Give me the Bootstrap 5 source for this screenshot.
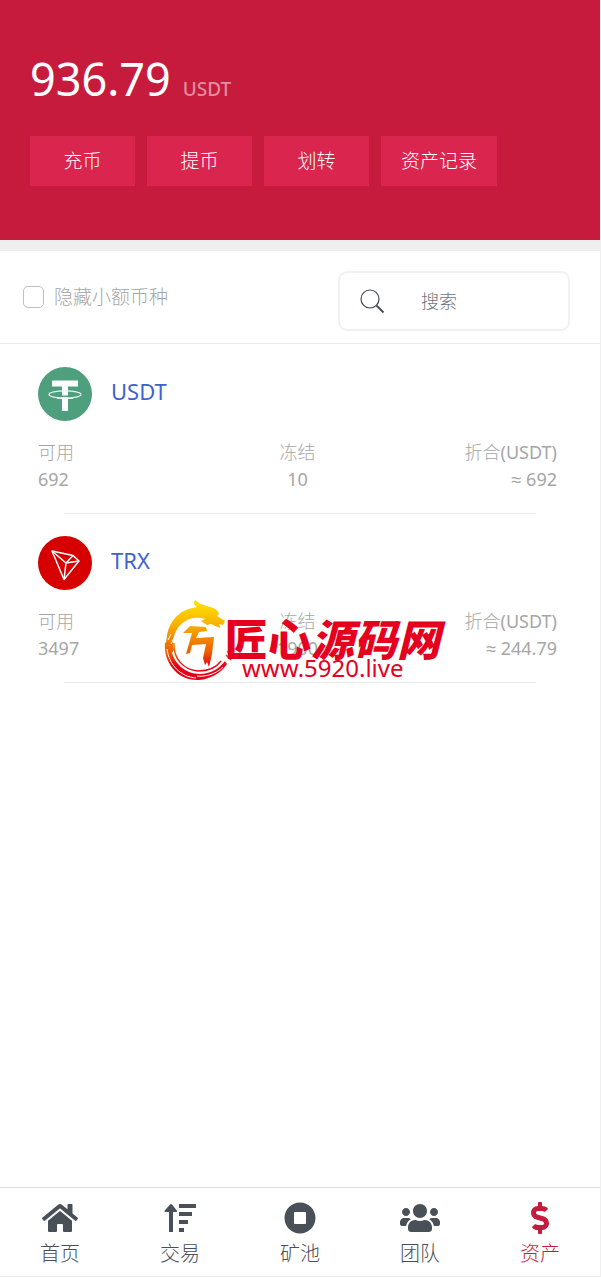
<!DOCTYPE html>
<html lang="zh-CN">
<head>
<meta charset="utf-8">
<meta name="viewport" content="width=device-width, initial-scale=1">
<title>资产</title>
<link href="https://cdn.jsdelivr.net/npm/bootstrap@5.3.0/dist/css/bootstrap.min.css" rel="stylesheet">
<style>
body { font-family: "Noto Sans", "Liberation Sans", "Noto Sans CJK SC Light", "Noto Sans CJK SC", sans-serif; font-size: 18px; line-height: 27px; color: #a6a6a6; background: #fff; }
.screen { min-height: 100vh; border-right: 1px solid #efefef; border-bottom: 1px solid #efefef; }
.hero { background: #c61b3c; padding: 48px 30px 54px; }
.total { font-size: 45px; line-height: 62px; color: #fff; }
.unit { font-size: 19px; font-weight: 500; color: #e38d9e; margin-left: 12px; }
.actions { gap: 12px; margin-top: 16px; }
.btn-act { --bs-btn-color: #fff; --bs-btn-bg: #da254f; --bs-btn-hover-color: #fff; --bs-btn-hover-bg: #e2315b; --bs-btn-border-width: 0; --bs-btn-border-radius: 0; --bs-btn-padding-y: 0; --bs-btn-padding-x: 20px; --bs-btn-font-size: 19px; min-width: 105px; height: 50px; }
.filters { border-top: 11px solid #eee; border-bottom: 1px solid #ebebeb; padding: 20px 30px 12px 23px; }
.hide-small { font-size: 19px; gap: 10px; margin-bottom: 8px; }
.hide-small .form-check-input { width: 21px; height: 22px; border-radius: 5px; border-color: #bfbfbf; margin: 0; }
.search { width: 232px; height: 60px; border: 2px solid #f1f1f1; border-radius: 9px; padding: 0 20px; }
.search .form-control { font-size: 18px; line-height: 27px; margin-left: 36px; border: 0; padding: 0; box-shadow: none; min-width: 0; background: none; }
.search .form-control::placeholder { color: #6c757d; }
.assets { padding-top: 1px; }
.asset { padding: 22px 43px 0 38px; }
.coin { gap: 19px; margin-bottom: 18px; font-size: 22px; }
.coin a { color: #3e62d0; margin-bottom: 5px; }
.rule { height: 1px; background: #ebebeb; margin: 20px 21px 0 26px; }
.mark-site { left: 163px; top: 86px; color: #e60020; pointer-events: none; }
.mark-name { font-family: "Noto Sans CJK SC Black", "Noto Sans CJK SC", sans-serif; font-size: 43px; line-height: 50px; font-weight: 900; margin-top: 12px; margin-left: -8px; }
.mark-url { font-size: 24px; line-height: 24px; margin-top: -6px; margin-left: 9px; }
.tabs { border-top: 1px solid #dcdcdc; padding: 14px 0 7px; font-size: 20px; line-height: 30px; }
.tabs a { color: #495057; gap: 5px; }
.tabs a.active { color: #c61b3c; }
.tabs svg { height: 32px; fill: currentColor; }
</style>
</head>
<body>
<div class="screen d-flex flex-column position-relative">
  <header class="hero">
    <div class="total d-flex align-items-baseline"><span>936.79</span><span class="unit">USDT</span></div>
    <div class="actions d-flex flex-wrap">
      <button type="button" class="btn btn-act">充币</button>
      <button type="button" class="btn btn-act">提币</button>
      <button type="button" class="btn btn-act">划转</button>
      <button type="button" class="btn btn-act">资产记录</button>
    </div>
  </header>

  <form class="filters d-flex align-items-center justify-content-between">
    <div class="hide-small d-flex align-items-center">
      <input class="form-check-input" type="checkbox" id="hideSmall">
      <label for="hideSmall">隐藏小额币种</label>
    </div>
    <div class="search d-flex align-items-center">
      <label for="q" class="d-flex flex-shrink-0" aria-label="搜索"><svg width="25" height="25" viewBox="0 0 25 25" fill="none" stroke="#414a50"><circle cx="10" cy="10" r="9" stroke-width="1.2"/><path d="M16.5 16.5L23.5 23.5" stroke-width="1.8"/></svg></label>
      <input class="form-control" type="text" id="q" placeholder="搜索">
    </div>
  </form>

  <main class="assets">
    <section class="asset">
      <div class="coin d-flex align-items-center">
        <svg width="54" height="54" viewBox="0 0 54 54"><circle cx="27" cy="27" r="27" fill="#4d9f7e"/><path d="M14 13.500h26v6H30v24.500h-6V19.500H14z" fill="#fff"/><ellipse cx="27" cy="27.500" rx="16" ry="3.600" fill="none" stroke="#e9f5ef" stroke-width="1.200"/><path d="M23 28.500h8v1.500h-8z" fill="#4d9f7e"/><path d="M19 31.100q8 .8 16 0" fill="none" stroke="#e9f5ef" stroke-width="1.200"/></svg>
        <a href="#usdt" class="text-decoration-none">USDT</a>
      </div>
      <div class="row g-0">
        <div class="col"><div>可用</div><div>692</div></div>
        <div class="col text-center"><div>冻结</div><div>10</div></div>
        <div class="col text-end"><div>折合(USDT)</div><div>≈ 692</div></div>
      </div>
      <div class="rule"></div>
    </section>

    <section class="asset position-relative">
      <div class="coin d-flex align-items-center">
        <svg width="54" height="54" viewBox="0 0 54 54"><circle cx="27" cy="27" r="27" fill="#d60000"/><g fill="none" stroke="#fff" stroke-width="1.500" stroke-linejoin="round"><path d="M14 15L35 19.500L41 25L26 43.500Z"/><path d="M14 15L28 27L35 19.500M28 27L41 25M28 27L26 43.500"/></g></svg>
        <a href="#trx" class="text-decoration-none">TRX</a>
      </div>
      <div class="row g-0">
        <div class="col"><div>可用</div><div>3497</div></div>
        <div class="col text-center"><div>冻结</div><div>1900</div></div>
        <div class="col text-end"><div>折合(USDT)</div><div>≈ 244.79</div></div>
      </div>
      <div class="rule"></div>
      <div class="mark-site position-absolute d-flex align-items-start text-nowrap">
        <svg width="70" height="82" viewBox="0 0 70 82">
          <defs><linearGradient id="flame" gradientUnits="userSpaceOnUse" x1="0" y1="0" x2="0" y2="82"><stop offset="0" stop-color="#ffe600"/><stop offset=".3" stop-color="#f7b200"/><stop offset=".65" stop-color="#ec5a00"/><stop offset=".8" stop-color="#e60014"/></linearGradient></defs>
          <g fill="url(#flame)">
            <path d="M4 36C6 22 16 10 30 8L34 7C30 4 30 1 33 0C35 4 40 4 43 6C49 7 55 9 56 14L54 16L62 21L60 25L56 24L57 28L48 24L44 25L38 21L42 19C30 15 18 21 13 31C10 37 9 44 11 50L8 54L5 45L2 50Z"/>
            <path d="M20 33L27 26L43 27L44 31L36 32L33 38L51 37L49 54L46 67L44 62L42 65L40 58L43 44L29 45L31 37L27 53L23 54L29 33Z"/>
            <path d="M2 42C0 62 14 81 36 80C48 79 58 73 64 64L62 61C56 69 47 74 37 74C22 74 10 63 8 48Z"/>
          </g>
          <g fill="none" stroke="url(#flame)" stroke-width="1.400"><path d="M11 43C10 59 21 70 35 71C45 71 53 68 58 61M64 51L69 57M63 55L68 60"/></g>
          <g fill="none" stroke="#fff" stroke-width="1"><path d="M4 49C6 65 18 77 33 78M60 67C52 75 41 77 34 76M5 40L8 34M8 44L11 38"/></g>
        </svg>
        <div>
          <div class="mark-name">匠心<em>源码网</em></div>
          <div class="mark-url">www.5920.live</div>
        </div>
      </div>
    </section>
  </main>

  <nav class="tabs row g-0 mt-auto" aria-label="主导航">
    <a href="#home" class="col d-flex flex-column align-items-center text-decoration-none"><svg viewBox="0 0 576 512"><path d="M280.37 148.26L96 300.11V464a16 16 0 0 0 16 16l112.06-.29a16 16 0 0 0 15.92-16V368a16 16 0 0 1 16-16h64a16 16 0 0 1 16 16v95.64a16 16 0 0 0 16 16.05L464 480a16 16 0 0 0 16-16V300L295.67 148.26a12.19 12.19 0 0 0-15.3 0zM571.6 251.47L488 182.56V44.05a12 12 0 0 0-12-12h-56a12 12 0 0 0-12 12v72.61L318.47 43a48 48 0 0 0-61 0L4.34 251.47a12 12 0 0 0-1.6 16.9l25.5 31A12 12 0 0 0 45.15 301l235.22-193.74a12.19 12.19 0 0 1 15.3 0L530.9 301a12 12 0 0 0 16.9-1.6l25.5-31a12 12 0 0 0-1.7-16.93z"/></svg><span>首页</span></a>
    <a href="#trade" class="col d-flex flex-column align-items-center text-decoration-none"><svg viewBox="0 0 32 32"><path d="M5 30V10H1.500Q0 10 .6 8.700L6 2.500Q7 1.500 8 2.500L13 8.700Q13.600 10 12 10H9V30H5zM15 2H32V6H15zM15 10H28V14H15zM15 18H24V22H15zM15 26H20V30H15z"/></svg><span>交易</span></a>
    <a href="#pool" class="col d-flex flex-column align-items-center text-decoration-none"><svg viewBox="0 0 512 512"><path d="M256 8C119 8 8 119 8 256s111 248 248 248 248-111 248-248S393 8 256 8zm96 328c0 8.800-7.200 16-16 16H176c-8.800 0-16-7.200-16-16V176c0-8.800 7.200-16 16-16h160c8.800 0 16 7.200 16 16v160z"/></svg><span>矿池</span></a>
    <a href="#team" class="col d-flex flex-column align-items-center text-decoration-none"><svg viewBox="0 0 640 512"><path d="M96 224c35.300 0 64-28.700 64-64s-28.700-64-64-64-64 28.700-64 64 28.700 64 64 64zm448 0c35.300 0 64-28.700 64-64s-28.700-64-64-64-64 28.700-64 64 28.700 64 64 64zm32 32h-64c-17.600 0-33.500 7.100-45.100 18.600 40.300 22.100 68.900 62 75.100 109.400h66c17.700 0 32-14.300 32-32v-32c0-35.300-28.700-64-64-64zm-256 0c61.900 0 112-50.100 112-112S381.900 32 320 32 208 82.100 208 144s50.100 112 112 112zm76.800 32h-8.300c-20.800 10-43.900 16-68.500 16s-47.600-6-68.500-16h-8.300C179.600 288 128 339.600 128 403.200V432c0 26.500 21.500 48 48 48h288c26.500 0 48-21.500 48-48v-28.800c0-63.600-51.600-115.200-115.200-115.200zm-223.700-13.400C161.500 263.100 145.600 256 128 256H64c-35.300 0-64 28.700-64 64v32c0 17.700 14.300 32 32 32h65.900c6.300-47.400 34.900-87.300 75.200-109.400z"/></svg><span>团队</span></a>
    <a href="#assets" class="active col d-flex flex-column align-items-center text-decoration-none" aria-current="page"><svg viewBox="0 0 288 512"><path d="M209.200 233.400l-108-31.600C88.700 198.200 80 186.500 80 173.500c0-16.300 13.200-29.500 29.500-29.500h66.300c12.200 0 24.200 3.700 34.200 10.500 6.100 4.100 14.300 3.100 19.500-2l34.800-34c7.100-6.900 6.100-18.400-1.800-24.500C238 74.800 207.400 64.100 176 64V16c0-8.800-7.200-16-16-16h-32c-8.800 0-16 7.200-16 16v48h-2.500C45.800 64-5.400 118.700.5 183.600c4.200 46.100 39.400 83.600 83.800 96.600l102.500 30c12.500 3.700 21.200 15.300 21.200 28.300 0 16.300-13.200 29.500-29.500 29.500h-66.300C100 368 88 364.300 78 357.500c-6.100-4.100-14.300-3.100-19.500 2l-34.800 34c-7.100 6.900-6.100 18.400 1.800 24.500 24.500 19.200 55.100 29.900 86.500 30v48c0 8.800 7.200 16 16 16h32c8.800 0 16-7.200 16-16v-48.200c46.600-.9 90.300-28.600 105.700-72.700 21.500-61.600-14.600-124.800-72.500-141.700z"/></svg><span>资产</span></a>
  </nav>
</div>
<script src="https://cdn.jsdelivr.net/npm/bootstrap@5.3.0/dist/js/bootstrap.bundle.min.js"></script>
</body>
</html>
